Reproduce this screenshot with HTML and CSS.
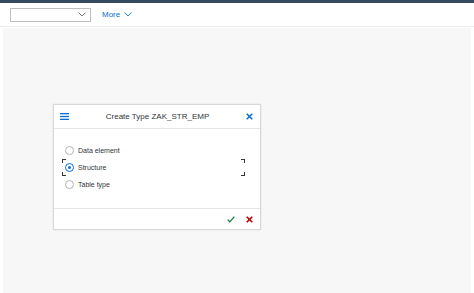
FILE: index.html
```html
<!DOCTYPE html>
<html lang="en">
<head>
    <meta charset="UTF-8">
    <meta name="viewport" content="width=device-width, initial-scale=1.0">
    <title>Create Type</title>
    <link rel="stylesheet" href="styles.css">
</head>
<body>

<div class="shell-bar"></div>

<div class="toolbar">
    <div class="select">
        <svg class="select-arrow" width="8" height="5" viewBox="0 0 8 5"><path d="M0.5 0.5 L4 4 L7.5 0.5" fill="none" stroke="#6a6d70" stroke-width="0.9"/></svg>
    </div>
    <button class="more">More
        <svg width="8" height="5" viewBox="0 0 8 5"><path d="M0.5 0.5 L4 4 L7.5 0.5" fill="none" stroke="#0a6ed1" stroke-width="0.9"/></svg>
    </button>
</div>

<div class="content">
    <div class="dialog">
        <div class="dialog-header">
            <svg class="menu-icon" width="9" height="7" viewBox="0 0 9 7">
                <rect x="0" y="0" width="9" height="1.3" fill="#0a6ed1"/>
                <rect x="0" y="2.85" width="9" height="1.3" fill="#0a6ed1"/>
                <rect x="0" y="5.7" width="9" height="1.3" fill="#0a6ed1"/>
            </svg>
            <span class="dialog-title">Create Type ZAK_STR_EMP</span>
            <svg class="close-icon" width="7" height="7" viewBox="0 0 7 7"><path d="M0.7 0.7 L6.3 6.3 M6.3 0.7 L0.7 6.3" stroke="#0a6ed1" stroke-width="1.5"/></svg>
        </div>
        <div class="dialog-body">
            <label class="option"><span class="radio"></span>Data element</label>
            <label class="option focused"><span class="radio checked"></span>Structure
                <span class="corner tl"></span><span class="corner tr"></span>
                <span class="corner bl"></span><span class="corner br"></span>
            </label>
            <label class="option"><span class="radio"></span>Table type</label>
        </div>
        <div class="dialog-footer">
            <svg width="8" height="7" viewBox="0 0 8 7"><path d="M0.7 3.6 L2.9 5.9 L7.3 0.7" fill="none" stroke="#107e3e" stroke-width="1.3"/></svg>
            <svg width="7" height="7" viewBox="0 0 7 7"><path d="M0.7 0.7 L6.3 6.3 M6.3 0.7 L0.7 6.3" stroke="#bb0000" stroke-width="1.6"/></svg>
        </div>
    </div>
</div>

</body>
</html>
```

FILE: styles.css
```css
body {
    font-family: "Liberation Sans", Arial, sans-serif;
    margin: 0;
    background-color: #fff;
    height: 293px;
    display: flex;
    flex-direction: column;
    overflow: hidden;
}
.shell-bar {
    height: 3px;
    background-color: #354a5f;
}
.toolbar {
    height: 24px;
    display: flex;
    align-items: center;
    padding-left: 10px;
    border-bottom: 1px solid #ebebeb;
    box-sizing: border-box;
}
.select {
    width: 81px;
    height: 14px;
    border: 1px solid #bfbfbf;
    box-sizing: border-box;
    background: #fff;
    display: flex;
    align-items: center;
    justify-content: flex-end;
    padding-right: 4px;
}
.more {
    margin-left: 11px;
    background: none;
    border: none;
    padding: 0;
    color: #0a6ed1;
    font-family: inherit;
    font-size: 8px;
    display: flex;
    align-items: center;
    gap: 4px;
}
.content {
    flex: 1;
    margin: 1px 3px 0 3px;
    background-color: #f7f7f7;
    padding: 76px 0 0 50px;
}
.dialog {
    width: 208px;
    height: 126px;
    background: #fff;
    border: 1px solid #d9d9d9;
    box-sizing: border-box;
    box-shadow: 0 0 2px rgba(0, 0, 0, 0.1);
    display: flex;
    flex-direction: column;
}
.dialog-header {
    height: 23px;
    display: flex;
    align-items: center;
    padding: 0 7px 0 6px;
    border-bottom: 1px solid #e5e5e5;
    flex-shrink: 0;
}
.dialog-title {
    flex: 1;
    text-align: center;
    font-size: 8px;
    color: #32363a;
}
.dialog-body {
    flex: 1;
    padding: 13px 0 0 11px;
    display: flex;
    flex-direction: column;
}
.option {
    position: relative;
    height: 17px;
    display: flex;
    align-items: center;
    font-size: 7px;
    color: #32363a;
}
.radio {
    width: 7px;
    height: 7px;
    border: 1px solid #b3b3b3;
    border-radius: 50%;
    margin-right: 4px;
    background: #fff;
    position: relative;
}
.radio.checked {
    border-color: #0a6ed1;
}
.radio.checked::after {
    content: "";
    position: absolute;
    left: 2px;
    top: 2px;
    width: 3px;
    height: 3px;
    border-radius: 50%;
    background: #0a6ed1;
}
.focused {
    width: 180px;
    margin-left: -1px;
    padding-left: 1px;
}
.corner {
    position: absolute;
    width: 3px;
    height: 3px;
    border-color: #32363a;
    border-style: solid;
    border-width: 0;
}
.corner.tl { left: -2px; top: 0; border-top-width: 1px; border-left-width: 1px; }
.corner.tr { right: 0; top: 0; border-top-width: 1px; border-right-width: 1px; }
.corner.bl { left: -2px; bottom: 0; border-bottom-width: 1px; border-left-width: 1px; }
.corner.br { right: 0; bottom: 0; border-bottom-width: 1px; border-right-width: 1px; }
.dialog-footer {
    height: 20px;
    border-top: 1px solid #e5e5e5;
    display: flex;
    align-items: center;
    justify-content: flex-end;
    gap: 11px;
    padding-right: 7px;
    flex-shrink: 0;
}
```
